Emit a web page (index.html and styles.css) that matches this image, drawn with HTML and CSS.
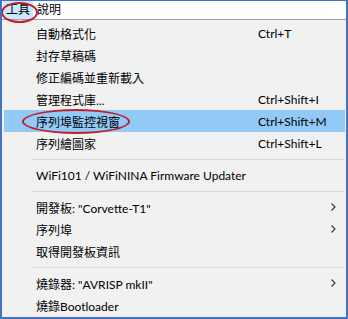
FILE: index.html
```html
<!DOCTYPE html>
<html lang="zh-Hant">
<head>
  <meta charset="UTF-8" />
  <title>工具</title>
  <link rel="stylesheet" href="styles.css">
</head>
<body>

  <div class="window">
    <div class="menubar">
      <span class="menubar-item active">工具</span>
      <span class="menubar-item">說明</span>
    </div>

    <div class="menu">
      <div class="item"><span>自動格式化</span><span>Ctrl+T</span></div>
      <div class="item"><span>封存草稿碼</span><span></span></div>
      <div class="item"><span>修正編碼並重新載入</span><span></span></div>
      <div class="item"><span>管理程式庫...</span><span>Ctrl+Shift+I</span></div>
      <div class="item selected"><span>序列埠監控視窗</span><span>Ctrl+Shift+M</span></div>
      <div class="item"><span>序列繪圖家</span><span>Ctrl+Shift+L</span></div>
      <div class="separator"></div>
      <div class="item"><span>WiFi101 / WiFiNINA Firmware Updater</span><span></span></div>
      <div class="separator"></div>
      <div class="item"><span>開發板: "Corvette-T1"</span><span></span><span class="arrow"><svg width="5" height="8" viewBox="0 0 5 8"><path d="M0.5 0.5 L4 4 L0.5 7.5" fill="none" stroke="#333" stroke-width="1.1"/></svg></span></div>
      <div class="item"><span>序列埠</span><span></span><span class="arrow"><svg width="5" height="8" viewBox="0 0 5 8"><path d="M0.5 0.5 L4 4 L0.5 7.5" fill="none" stroke="#333" stroke-width="1.1"/></svg></span></div>
      <div class="item"><span>取得開發板資訊</span><span></span></div>
      <div class="separator"></div>
      <div class="item"><span>燒錄器: "AVRISP mkII"</span><span></span><span class="arrow"><svg width="5" height="8" viewBox="0 0 5 8"><path d="M0.5 0.5 L4 4 L0.5 7.5" fill="none" stroke="#333" stroke-width="1.1"/></svg></span></div>
      <div class="item"><span>燒錄Bootloader</span><span></span></div>
    </div>

    <!-- 紅圈標註 -->
    <div class="mark mark-tools"></div>
    <div class="mark mark-monitor"></div>
  </div>

</body>
</html>
```

FILE: styles.css
```css
body {
  margin: 0;
  font-family: Lato, "Noto Sans CJK TC", sans-serif;
  font-size: 12px;
  color: #000;
}
.window {
  position: relative;
  width: 348px;
  height: 319px;
  box-sizing: border-box;
  border-top: 1px solid #4472c4;
  border-left: 2px solid #4472c4;
  border-right: 2px solid #4472c4;
  border-bottom: 2px solid #4472c4;
  background: #f1f1f1;
  overflow: hidden;
}
.menubar {
  display: flex;
  height: 18px;
  padding-left: 1px;
  background: #fff;
  border-bottom: 1px solid #a0a0a0;
  align-items: stretch;
}
.menubar-item {
  display: flex;
  align-items: center;
  padding: 0 3px;
  margin-right: 1px;
  line-height: 1;
}
.menubar-item.active {
  background: #cce8ff;
}
.menu {
  padding-top: 2px;
}
.item {
  display: grid;
  grid-template-columns: 222px 1fr 14px;
  align-items: center;
  height: 22px;
  margin: 0 1px 0 2px;
  padding-left: 32px;
  white-space: nowrap;
}
.item.selected {
  background: #91c9f7;
}
.arrow {
  display: flex;
  align-items: center;
}
.separator {
  height: 10px;
  margin: 0 1px 0 30px;
  display: flex;
  align-items: center;
}
.separator::after {
  content: "";
  flex: 1;
  height: 1px;
  background: #d7d7d7;
}
.mark {
  position: absolute;
  border: 2px solid #c0202a;
  border-radius: 50%;
  box-sizing: border-box;
}
.mark-tools {
  left: -1px;
  top: 1px;
  width: 37px;
  height: 21px;
}
.mark-monitor {
  left: 20px;
  top: 108px;
  width: 108px;
  height: 25px;
}
```
